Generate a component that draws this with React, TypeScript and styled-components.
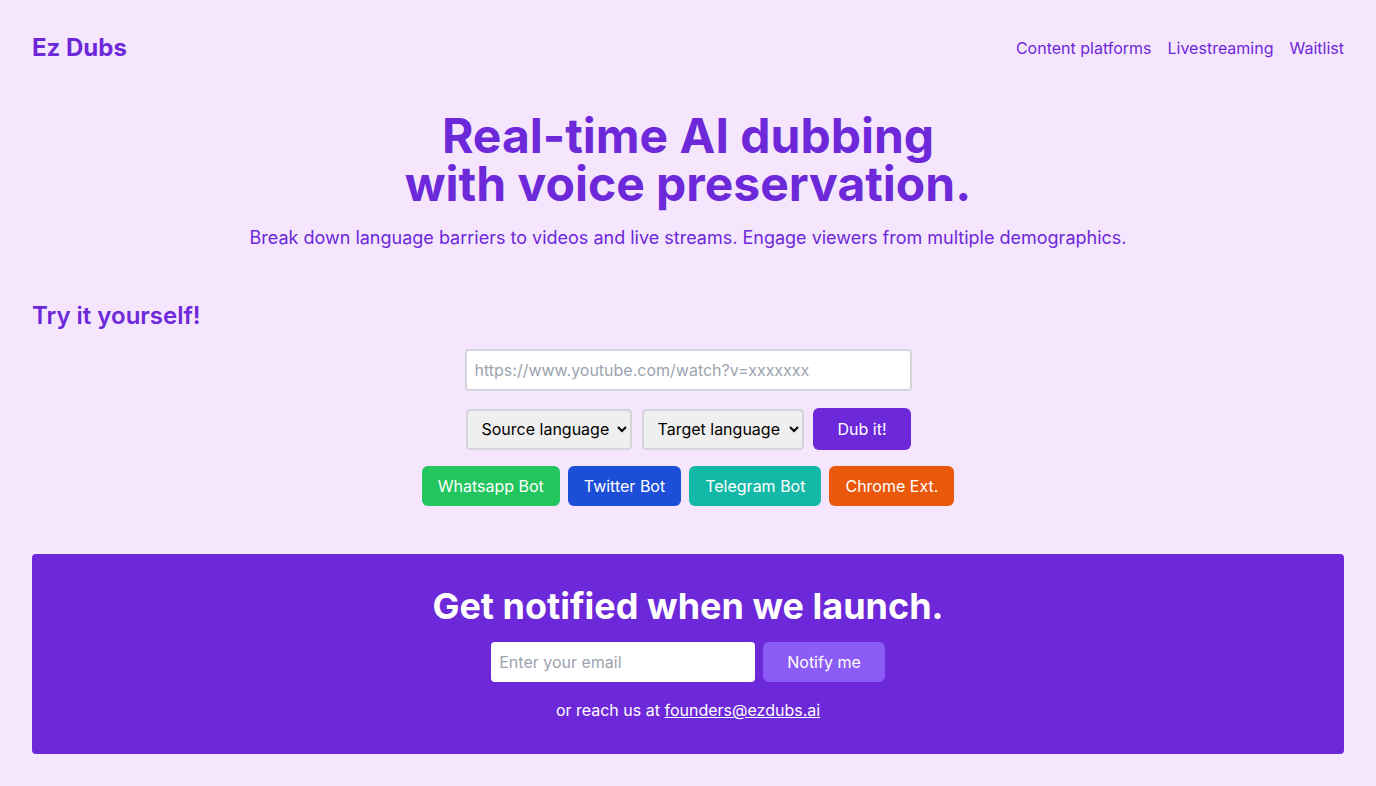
import React from "react";
import styled, { createGlobalStyle } from "styled-components";

const Global = createGlobalStyle`
  html, body { margin: 0; padding: 0; }
  body {
    background: #f5e6fd;
    font-family: Inter, "Noto Sans", sans-serif;
    color: #6d28d9;
  }
  * { box-sizing: border-box; }
`;

const Page = styled.div`
  min-height: 786px;
  padding: 32px 32px 32px;
  display: flex;
  flex-direction: column;
`;

const Header = styled.header`
  display: flex;
  justify-content: space-between;
  align-items: center;
  height: 32px;
`;

const Logo = styled.div`
  font-size: 24px;
  line-height: 32px;
  font-weight: 700;
  color: #6d28d9;
`;

const Nav = styled.nav`
  display: flex;
  gap: 16px;
`;

const NavLink = styled.a`
  font-size: 16px;
  line-height: 24px;
  color: #6d28d9;
  text-decoration: none;
`;

const Hero = styled.section`
  margin-top: 48px;
  display: flex;
  flex-direction: column;
  align-items: center;
  text-align: center;
`;

const Title = styled.h1`
  margin: 0;
  font-size: 48px;
  line-height: 48px;
  font-weight: 700;
  color: #6d28d9;
`;

const TitleLine = styled.span`
  display: block;
  height: 48px;
`;

const Subtitle = styled.p`
  margin: 16px 0 0;
  font-size: 18px;
  line-height: 28px;
  color: #6d28d9;
`;

const TryTitle = styled.h2`
  margin: 48px 0 0;
  font-size: 24px;
  line-height: 32px;
  font-weight: 600;
  color: #6d28d9;
`;

const Form = styled.div`
  margin-top: 17px;
  display: flex;
  flex-direction: column;
  align-items: center;
`;

const UrlInput = styled.input`
  width: 447px;
  height: 42px;
  border: 2px solid #d4d4dc;
  border-radius: 4px;
  padding: 0 8px;
  font-family: Inter, sans-serif;
  font-size: 16px;
  background: #fff;
  outline: none;
  &::placeholder { color: #9ca3af; }
`;

const Row = styled.div<{ $top: number }>`
  margin-top: ${(p) => p.$top}px;
  display: flex;
  gap: 8px;
  align-items: center;
`;

const Select = styled.select<{ $w: number }>`
  width: ${(p) => p.$w}px;
  height: 41px;
  border: 2px solid #d4d4dc;
  border-radius: 4px;
  background: #efefef;
  color: #000;
  font-family: Inter, sans-serif;
  font-size: 16px;
  padding: 0 2px 0 9px;
  margin: 0 1px;
`;

const Button = styled.button<{ $bg: string; $h?: number; $px?: number }>`
  height: ${(p) => p.$h ?? 40}px;
  padding: 0 ${(p) => p.$px ?? 16}px;
  border: none;
  border-radius: 6px;
  background: ${(p) => p.$bg};
  color: #fff;
  font-family: Inter, sans-serif;
  font-size: 16px;
  cursor: pointer;
`;

const Panel = styled.section`
  margin-top: 48px;
  background: #6d28d9;
  border-radius: 4px;
  padding: 32px 32px 32px;
  display: flex;
  flex-direction: column;
  align-items: center;
  color: #fff;
`;

const PanelTitle = styled.h2`
  margin: 0;
  font-size: 36px;
  line-height: 40px;
  font-weight: 700;
  color: #fff;
`;

const EmailInput = styled.input`
  width: 264px;
  height: 40px;
  border: none;
  border-radius: 4px;
  padding: 0 8px;
  font-family: Inter, sans-serif;
  font-size: 16px;
  outline: none;
  &::placeholder { color: #9ca3af; }
`;

const Reach = styled.p`
  margin: 16px 0 0;
  font-size: 16px;
  line-height: 24px;
  color: #fff;
  a { color: #fff; text-decoration: underline; }
`;

export default function App() {
  return (
    <>
      <Global />
      <Page>
        <Header>
          <Logo>Ez Dubs</Logo>
          <Nav>
            <NavLink href="#">Content platforms</NavLink>
            <NavLink href="#">Livestreaming</NavLink>
            <NavLink href="#">Waitlist</NavLink>
          </Nav>
        </Header>
        <Hero>
          <Title>
            <TitleLine>Real-time AI dubbing</TitleLine>
            <TitleLine>with voice preservation.</TitleLine>
          </Title>
          <Subtitle>
            Break down language barriers to videos and live streams. Engage viewers from multiple demographics.
          </Subtitle>
        </Hero>
        <TryTitle>Try it yourself!</TryTitle>
        <Form>
          <UrlInput placeholder="https://www.youtube.com/watch?v=xxxxxxx" />
          <Row $top={17}>
            <Select $w={166} defaultValue="">
              <option value="">Source language</option>
            </Select>
            <Select $w={162} defaultValue="">
              <option value="">Target language</option>
            </Select>
            <Button $bg="#6d28d9" $h={42} $px={24}>Dub it!</Button>
          </Row>
          <Row $top={16}>
            <Button $bg="#22c55e">Whatsapp Bot</Button>
            <Button $bg="#1d4ed8">Twitter Bot</Button>
            <Button $bg="#14b8a6">Telegram Bot</Button>
            <Button $bg="#ea580c">Chrome Ext.</Button>
          </Row>
        </Form>
        <Panel>
          <PanelTitle>Get notified when we launch.</PanelTitle>
          <Row $top={16}>
            <EmailInput placeholder="Enter your email" />
            <Button $bg="#8b5cf6" $px={24}>Notify me</Button>
          </Row>
          <Reach>
            or reach us at <a href="#">founders@ezdubs.ai</a>
          </Reach>
        </Panel>
      </Page>
    </>
  );
}
